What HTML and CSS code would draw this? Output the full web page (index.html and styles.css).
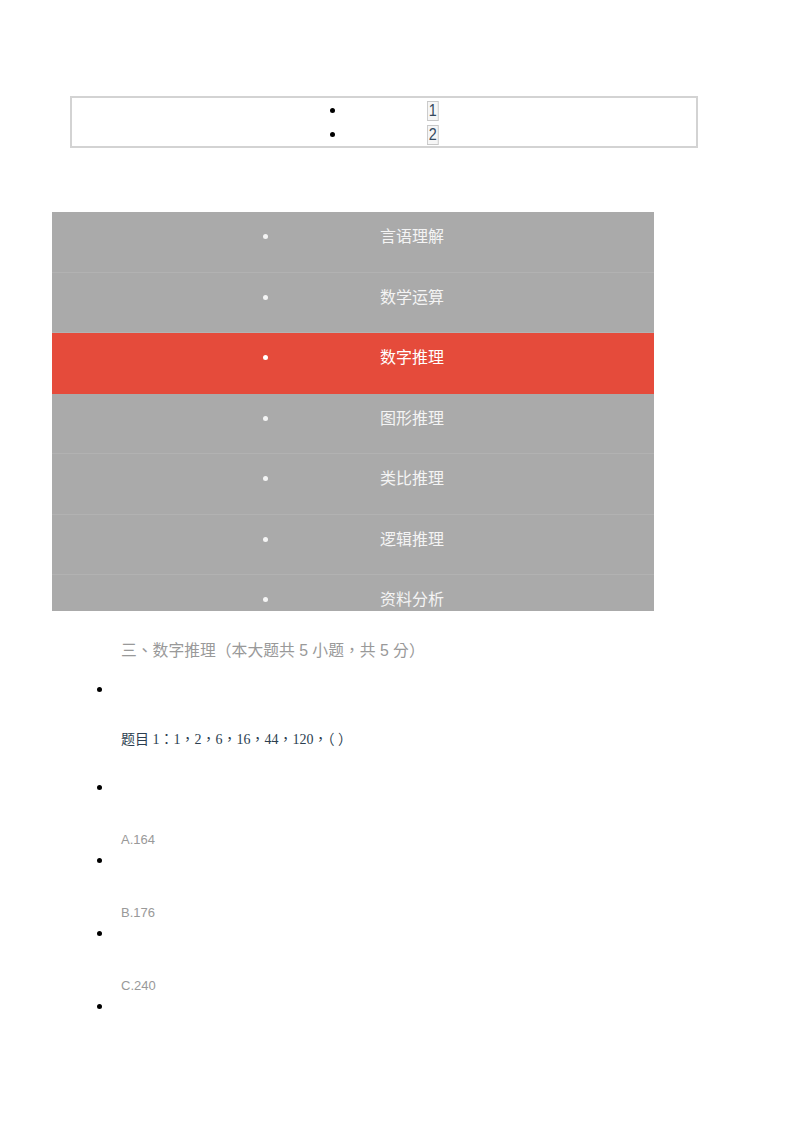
FILE: index.html
```html
<!DOCTYPE html>
<html lang="zh-CN">
  <head>
    <meta charset="UTF-8" />
    <meta name="viewport" content="width=device-width, initial-scale=1.0" />
    <title>数字推理</title>
    <link rel="stylesheet" href="styles.css">
  </head>
  <body>
    <div class="pager">
      <ul class="pager-list">
        <li><span class="page-num">1</span></li>
        <li><span class="page-num">2</span></li>
      </ul>
    </div>

    <ul class="tabs">
      <li><span class="tab-label">言语理解</span></li>
      <li><span class="tab-label">数学运算</span></li>
      <li class="active"><span class="tab-label">数字推理</span></li>
      <li><span class="tab-label">图形推理</span></li>
      <li><span class="tab-label">类比推理</span></li>
      <li><span class="tab-label">逻辑推理</span></li>
      <li><span class="tab-label">资料分析</span></li>
    </ul>

    <div class="paper">
      <h3 class="section-title" lang="zh-Hant">三、数字推理（本大题共 5 小题，共 5 分）</h3>
      <ul class="questions">
        <li class="question"><br /><p class="q-title" lang="zh-Hant"><span class="q-label">题目</span> 1：1，2，6，16，44，120，（ ）</p></li>
        <li class="option"><br /><p>A.164</p></li>
        <li class="option"><br /><p>B.176</p></li>
        <li class="option"><br /><p>C.240</p></li>
        <li class="option"><br /></li>
      </ul>
    </div>
  </body>
</html>
```

FILE: styles.css
```css
body {
  margin: 0;
  padding-top: 96px;
  font-family: "Liberation Sans", "Noto Sans CJK SC", sans-serif;
  background: #fff;
}

.pager {
  margin-left: 70px;
  width: 628px;
  box-sizing: border-box;
  border: 2px solid #d3d3d3;
}
.pager-list {
  margin: 0;
  padding-left: 274px;
  font-size: 16px;
  line-height: 24px;
  color: #000;
}
.pager-list li {
  padding-left: 81px;
}
.page-num {
  display: inline-block;
  border: 1px solid #c8c8c8;
  background: #f6f6f6;
  padding: 1px 1px;
  line-height: 16px;
  font-size: 16px;
  color: #34495e;
  vertical-align: middle;
  transform: scaleX(0.9);
  transform-origin: left center;
}

.tabs {
  margin: 64px 0 0 52px;
  width: 602px;
  height: 399px;
  overflow: hidden;
  padding: 0;
  background: #aaaaaa;
  color: #f4f4f4;
  font-family: "Noto Sans CJK SC", sans-serif;
  font-size: 16px;
  line-height: 20px;
}
.tabs li {
  height: 60.5px;
  box-sizing: border-box;
  padding: 13px 0 0 211px;
  list-style: disc inside;
  border-bottom: 1px solid #b2b2b2;
}
.tabs li::marker {
  font-size: 13px;
}
.tab-label {
  margin-left: 98px;
}
.tabs li.active {
  background: #e54b3b;
  color: #fff;
  border-bottom-color: #e54b3b;
}

.paper {
  margin-top: 30px;
}
.section-title {
  margin: 0 0 0 121px;
  font-family: "Liberation Sans", "Noto Sans CJK TC", sans-serif;
  font-weight: normal;
  font-size: 15.8px;
  line-height: 20px;
  color: #999;
}
.questions {
  margin: 17px 0 0;
  padding-left: 113px;
  font-size: 16px;
  line-height: 22px;
}
.questions p {
  margin: 0;
  padding-left: 8px;
}
.q-title {
  margin: 27px 0 25px !important;
  font-family: "Liberation Serif", "Noto Sans CJK TC", serif;
  font-size: 14px;
  color: #2c3e50;
}
.q-label {
  font-family: "Noto Sans CJK SC", sans-serif;
}
.option p {
  margin: 34px 0 1px;
  font-size: 13px;
  line-height: 16px;
  color: #999;
}
```
